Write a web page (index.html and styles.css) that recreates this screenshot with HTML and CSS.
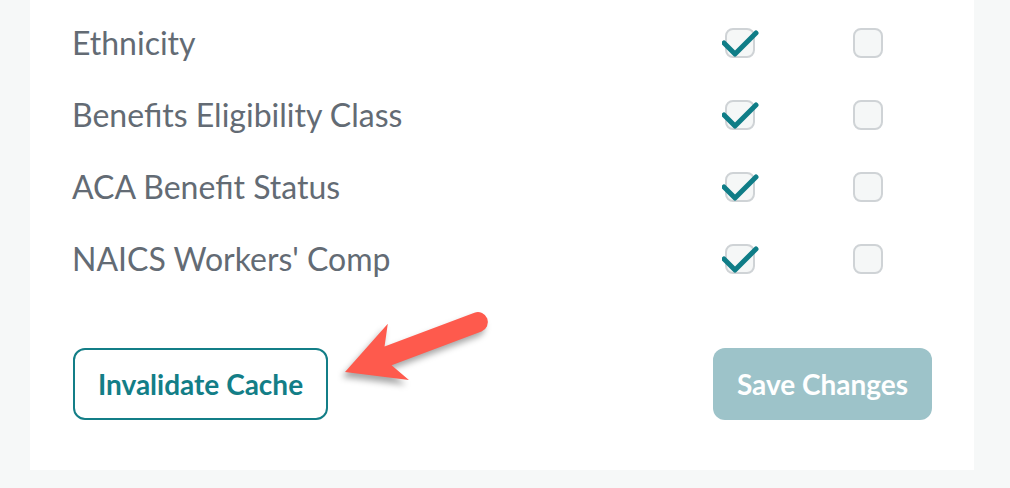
FILE: index.html
```html
<!DOCTYPE html>
<html>
<head>
<meta charset="utf-8">
<link rel="stylesheet" href="styles.css">
</head>
<body>
<div class="card">
  <div class="rows">
    <div class="row"><span class="label">Ethnicity</span><span class="box checked"><svg class="check" viewBox="0 0 40 34" width="40" height="34"><path d="M2 17 L13 28 L34 7"/></svg></span><span class="box"></span></div>
    <div class="row"><span class="label">Benefits Eligibility Class</span><span class="box checked"><svg class="check" viewBox="0 0 40 34" width="40" height="34"><path d="M2 17 L13 28 L34 7"/></svg></span><span class="box"></span></div>
    <div class="row"><span class="label">ACA Benefit Status</span><span class="box checked"><svg class="check" viewBox="0 0 40 34" width="40" height="34"><path d="M2 17 L13 28 L34 7"/></svg></span><span class="box"></span></div>
    <div class="row"><span class="label">NAICS Workers' Comp</span><span class="box checked"><svg class="check" viewBox="0 0 40 34" width="40" height="34"><path d="M2 17 L13 28 L34 7"/></svg></span><span class="box"></span></div>
  </div>
  <div class="actions">
    <button class="btn btn-outline">Invalidate Cache</button>
    <button class="btn btn-primary">Save Changes</button>
  </div>
  <svg class="arrow" width="1010" height="488" viewBox="0 0 1010 488">
    <g transform="translate(345 372) rotate(-20.6)">
      <path d="M0 0 L57 -30 L46 -10 L142 -10 A10 10 0 0 1 142 10 L46 10 L57 30 Z"/>
    </g>
  </svg>
</div>
</body>
</html>
```

FILE: styles.css
```css
html, body {
  margin: 0;
  padding: 0;
  background: #f6f8f8;
  width: 1010px;
  height: 488px;
  overflow: hidden;
}
.card {
  position: relative;
  margin-left: 30px;
  width: 944px;
  height: 470px;
  box-sizing: border-box;
  background: #ffffff;
  padding: 7px 42px 0 42px;
  font-family: Lato, "Noto Sans", sans-serif;
}
.rows {
  display: flex;
  flex-direction: column;
}
.row {
  display: flex;
  align-items: center;
  height: 72px;
}
.label {
  flex: 1;
  font-size: 32px;
  line-height: 40px;
  color: #636b74;
}
.box {
  position: relative;
  width: 30px;
  height: 30px;
  box-sizing: border-box;
  border: 2px solid #cfd3d6;
  border-radius: 8px;
  background: #f5f7f7;
  margin-left: 98px;
}
.box:last-child {
  margin-right: 49px;
}
.check {
  position: absolute;
  left: -5px;
  top: -4px;
}
.check path {
  fill: none;
  stroke: #0f7d87;
  stroke-width: 5;
  stroke-linecap: round;
  stroke-linejoin: round;
}
.actions {
  display: flex;
  justify-content: space-between;
  margin-top: 53px;
  padding-left: 1px;
}
.btn {
  font-family: Lato, "Noto Sans", sans-serif;
  font-weight: 700;
  font-size: 28px;
  height: 72px;
  border-radius: 12px;
  cursor: pointer;
  padding: 0;
}
.btn-outline {
  width: 255px;
  background: #ffffff;
  border: 2px solid #137e87;
  color: #137e87;
}
.btn-primary {
  width: 219px;
  background: #9dc3c9;
  border: none;
  color: #ffffff;
}
.arrow {
  position: absolute;
  left: -30px;
  top: 0;
  pointer-events: none;
  filter: drop-shadow(-3px 5px 3px rgba(0, 0, 0, 0.35));
}
.arrow path {
  fill: #fe5a4d;
}
```
